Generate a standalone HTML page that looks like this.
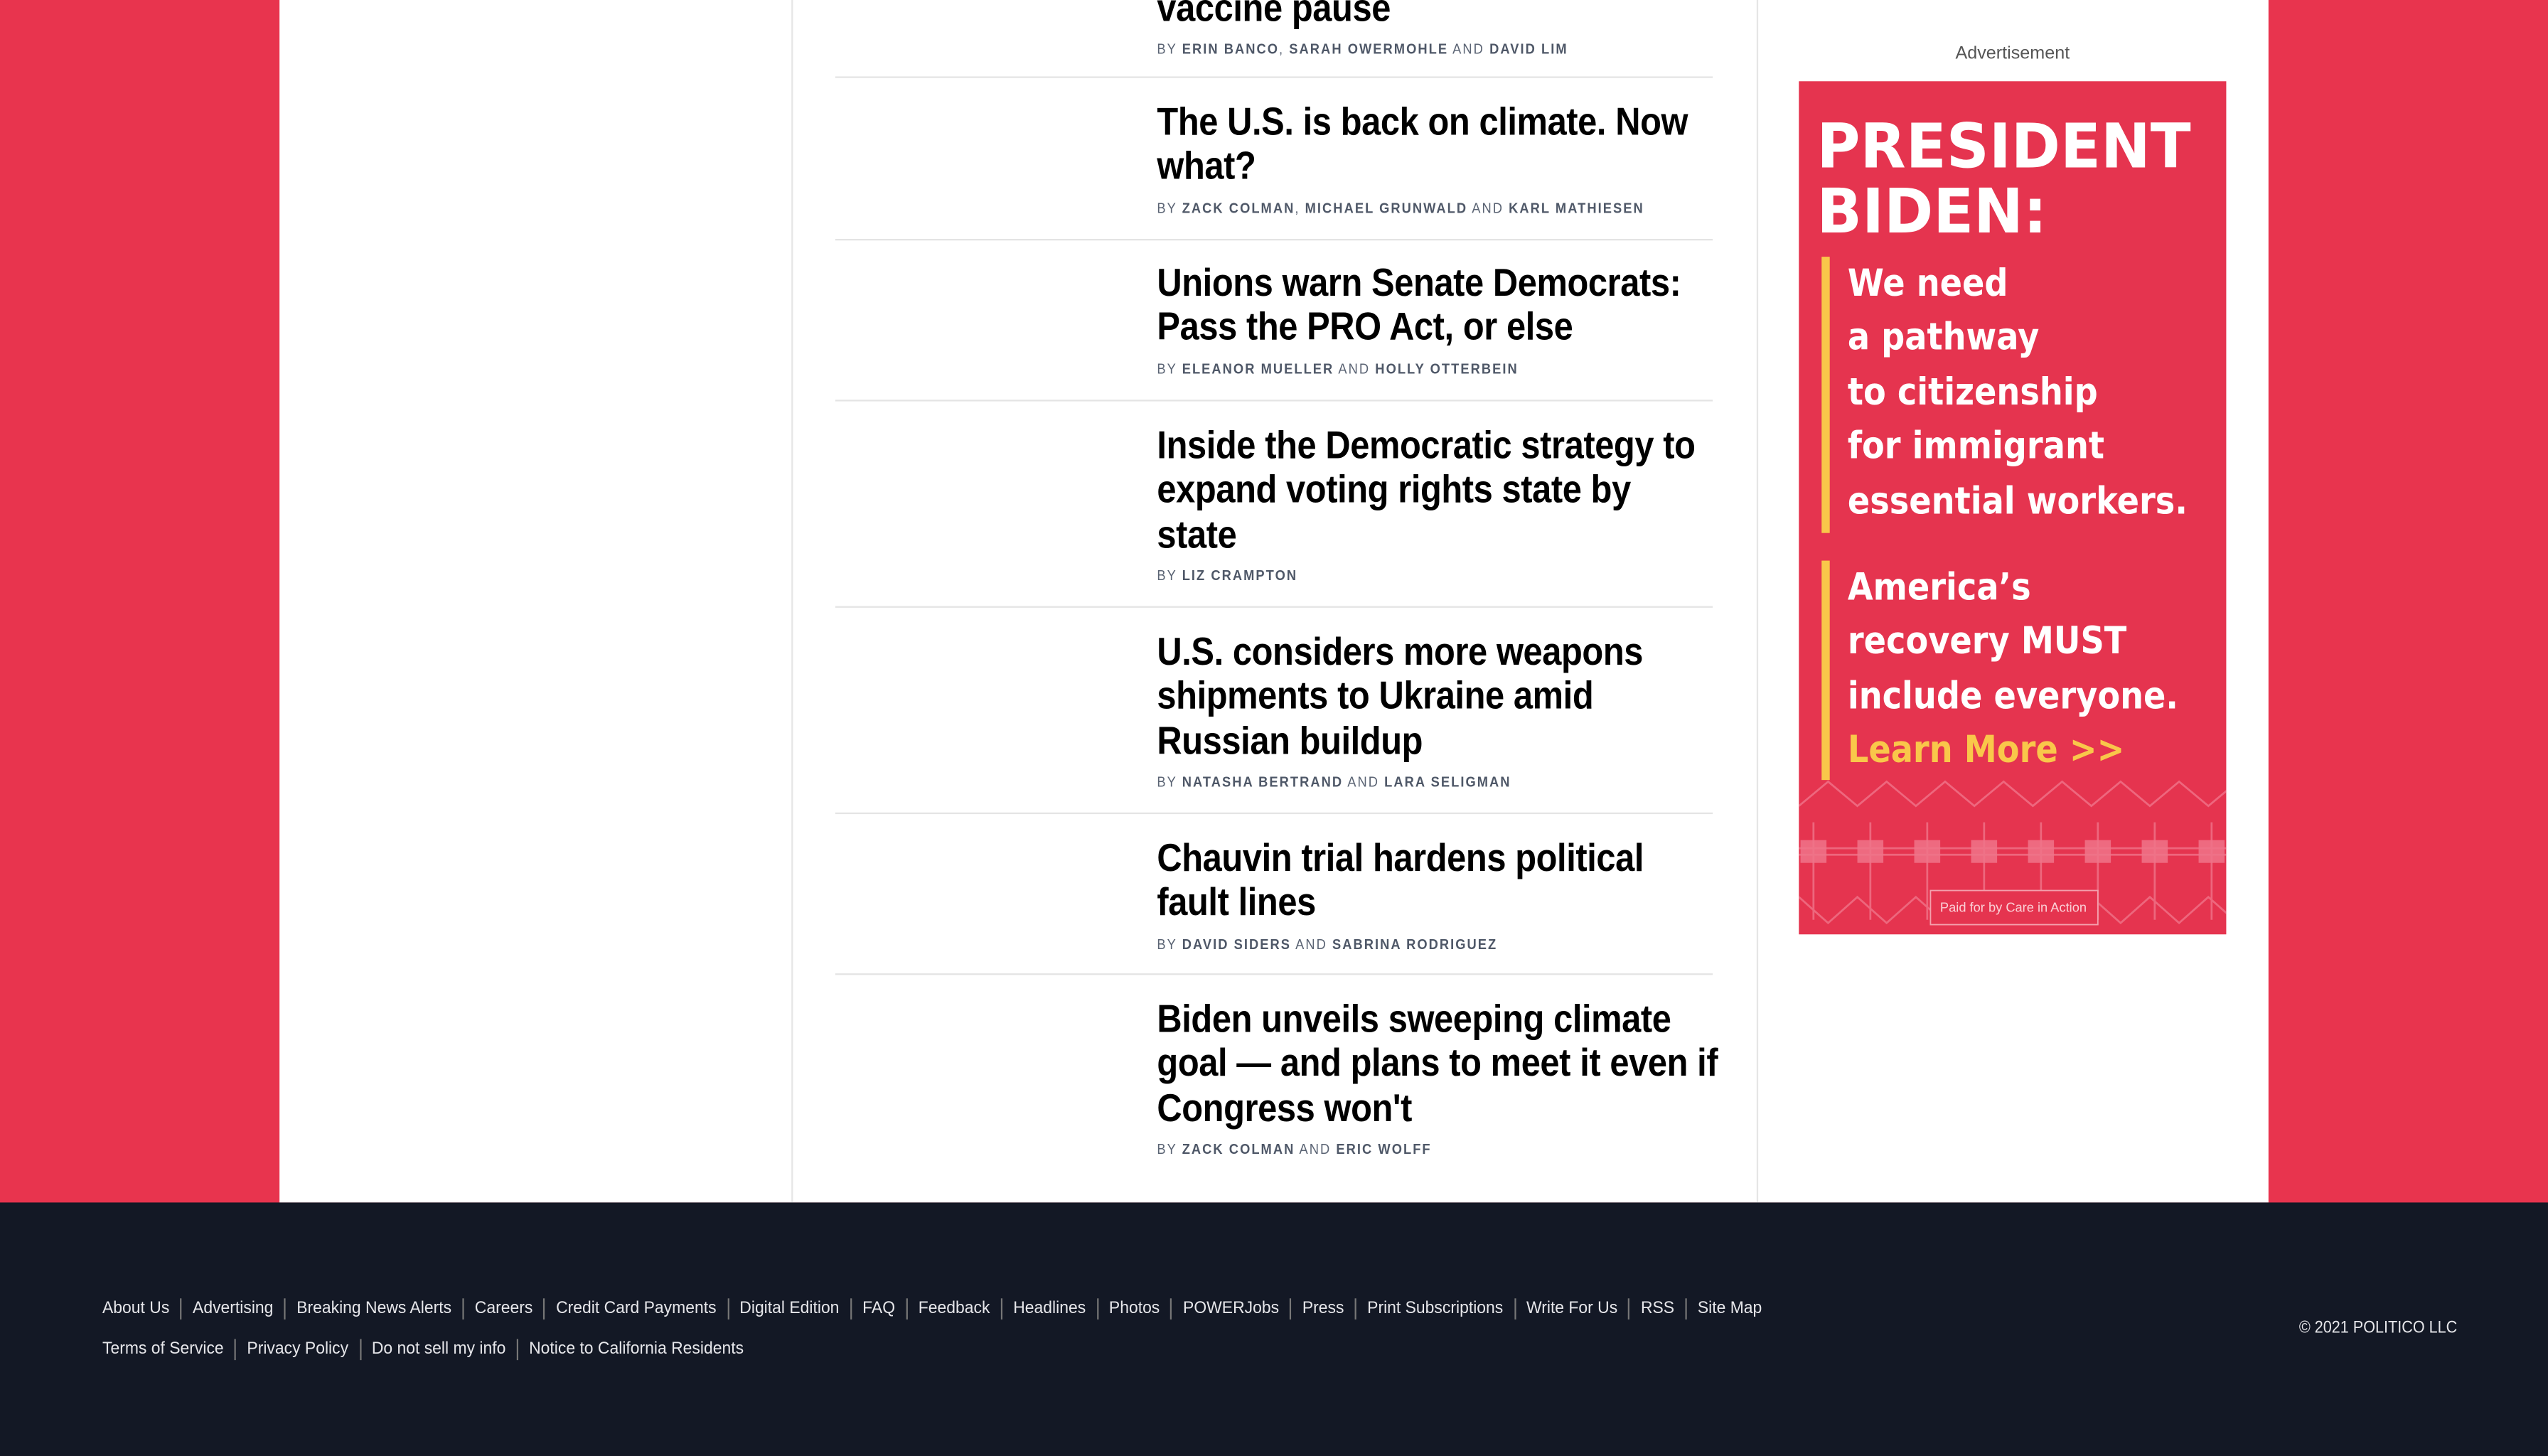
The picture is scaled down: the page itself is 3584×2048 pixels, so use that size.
<!DOCTYPE html>
<html><head><meta charset="utf-8"><style>
*{margin:0;padding:0;box-sizing:border-box}
html,body{width:3584px;height:2046px;overflow:hidden;background:#e8344e}
#w{position:absolute;left:0;top:0;width:1568px;height:895.2px;transform:scale(2.2857);transform-origin:0 0;background:#e8344e;font-family:"Liberation Sans",sans-serif}
.main{position:absolute;left:172px;top:0;width:1224px;height:740px;background:#fff}
.vl{position:absolute;top:0;height:740px;width:1px;background:#e6e6e6}
.sep{position:absolute;left:514px;width:540px;height:1px;background:#e4e4e4}
.it{position:absolute;left:712px;width:420px;transform:scaleX(0.89);transform-origin:0 0}
.h{font-weight:bold;font-size:24px;line-height:27.3px;color:#000;letter-spacing:-0.2px;white-space:nowrap}
.b{font-size:9px;letter-spacing:1px;color:#5b6474;margin-top:6px;line-height:10px;white-space:nowrap}
.b b{color:#4f5868}
.foot{position:absolute;left:0;top:740px;width:1568px;height:156px;background:#131825;color:#e6e6ea;font-size:10.5px}
.row{position:absolute;left:63px;white-space:nowrap;transform:scaleX(0.955);transform-origin:0 0}
.row span{display:inline-block;padding:0 7px;border-left:1px solid #777;line-height:13px}
.row span:first-child{padding-left:0;border-left:none}
.ad{position:absolute;left:1107px;top:50px;width:263px;height:525px;background:#e5344f;overflow:hidden;color:#fff;font-family:"DejaVu Sans","Liberation Sans",sans-serif;font-weight:bold}
.bar{position:absolute;left:14px;width:5px;background:#f9c74a}
.tx{position:absolute;white-space:nowrap;transform-origin:0 0}
</style></head><body><div id="w">
<div class="main"></div>
<div class="vl" style="left:487px"></div>
<div class="vl" style="left:1081px"></div>

<div class="it" style="top:-8px"><div class="h">vaccine pause</div><div class="b">BY <b>ERIN BANCO</b>, <b>SARAH OWERMOHLE</b> AND <b>DAVID LIM</b></div></div>
<div class="sep" style="top:47px"></div>
<div class="it" style="top:62px"><div class="h">The U.S. is back on climate. Now<br>what?</div><div class="b">BY <b>ZACK COLMAN</b>, <b>MICHAEL GRUNWALD</b> AND <b>KARL MATHIESEN</b></div></div>
<div class="sep" style="top:147px"></div>
<div class="it" style="top:161px"><div class="h">Unions warn Senate Democrats:<br>Pass the PRO Act, or else</div><div class="b">BY <b>ELEANOR MUELLER</b> AND <b>HOLLY OTTERBEIN</b></div></div>
<div class="sep" style="top:246px"></div>
<div class="it" style="top:261px"><div class="h">Inside the Democratic strategy to<br>expand voting rights state by<br>state</div><div class="b">BY <b>LIZ CRAMPTON</b></div></div>
<div class="sep" style="top:373px"></div>
<div class="it" style="top:388px"><div class="h">U.S. considers more weapons<br>shipments to Ukraine amid<br>Russian buildup</div><div class="b">BY <b>NATASHA BERTRAND</b> AND <b>LARA SELIGMAN</b></div></div>
<div class="sep" style="top:500px"></div>
<div class="it" style="top:515px"><div class="h">Chauvin trial hardens political<br>fault lines</div><div class="b">BY <b>DAVID SIDERS</b> AND <b>SABRINA RODRIGUEZ</b></div></div>
<div class="sep" style="top:599px"></div>
<div class="it" style="top:614px"><div class="h">Biden unveils sweeping climate<br>goal — and plans to meet it even if<br>Congress won't</div><div class="b">BY <b>ZACK COLMAN</b> AND <b>ERIC WOLFF</b></div></div>

<div style="position:absolute;left:1107px;width:263px;top:27px;text-align:center;font-size:11px;color:#555">Advertisement</div>
<div class="ad">
 <svg style="position:absolute;left:0;top:428px" width="263" height="97">
  <g fill="none" stroke="#f07489" stroke-width="1.2" opacity="0.8">
   <path d="M0 18 L18 3 L36 18 L54 3 L72 18 L90 3 L108 18 L126 3 L144 18 L162 3 L180 18 L198 3 L216 18 L234 3 L252 18 L270 3"/>
   <path d="M0 74 L18 90 L36 74 L54 90 L72 74 L90 90 L108 74 L126 90 L144 74 L162 90 L180 74 L198 90 L216 74 L234 90 L252 74 L270 90"/>
   <path d="M0 44 L263 44 M0 48 L263 48 M9 28 L9 88 M44 28 L44 88 M79 28 L79 88 M114 28 L114 88 M149 28 L149 88 M184 28 L184 88 M219 28 L219 88 M254 28 L254 88"/>
  </g>
  <g fill="#f07489" opacity="0.85">
   <rect x="1" y="39" width="16" height="14"/><rect x="36" y="39" width="16" height="14"/><rect x="71" y="39" width="16" height="14"/><rect x="106" y="39" width="16" height="14"/><rect x="141" y="39" width="16" height="14"/><rect x="176" y="39" width="16" height="14"/><rect x="211" y="39" width="16" height="14"/><rect x="246" y="39" width="16" height="14"/>
  </g>
  <rect x="81" y="70" width="103" height="21" fill="#e5344f" stroke="#f4a0ad" stroke-width="0.8"/>
  <text x="132" y="83" text-anchor="middle" font-family="Liberation Sans" font-size="8" fill="#fbd0d6" font-weight="normal">Paid for by Care in Action</text>
 </svg>
 <div class="tx" style="left:11px;top:20px;font-size:38px;line-height:40px;transform:scaleX(0.96)">PRESIDENT<br>BIDEN:</div>
 <div class="bar" style="top:108px;height:170px"></div>
 <div class="tx" style="left:30px;top:109px;font-size:23px;line-height:33.4px;transform:scaleX(0.88)">We need<br>a pathway<br>to citizenship<br>for immigrant<br>essential workers.</div>
 <div class="bar" style="top:295px;height:135px"></div>
 <div class="tx" style="left:30px;top:296px;font-size:23px;line-height:33.4px;transform:scaleX(0.88)">America’s<br>recovery MUST<br>include everyone.<br><span style="color:#f9c74a">Learn More &gt;&gt;</span></div>
</div>

<div class="foot">
 <div class="row" style="top:59px"><span>About Us</span><span>Advertising</span><span>Breaking News Alerts</span><span>Careers</span><span>Credit Card Payments</span><span>Digital Edition</span><span>FAQ</span><span>Feedback</span><span>Headlines</span><span>Photos</span><span>POWERJobs</span><span>Press</span><span>Print Subscriptions</span><span>Write For Us</span><span>RSS</span><span>Site Map</span></div>
 <div class="row" style="top:84px"><span>Terms of Service</span><span>Privacy Policy</span><span>Do not sell my info</span><span>Notice to California Residents</span></div>
 <div style="position:absolute;right:56px;top:71px;font-size:10.5px;transform:scaleX(0.9);transform-origin:100% 0">© 2021 POLITICO LLC</div>
</div>
</div></body></html>
